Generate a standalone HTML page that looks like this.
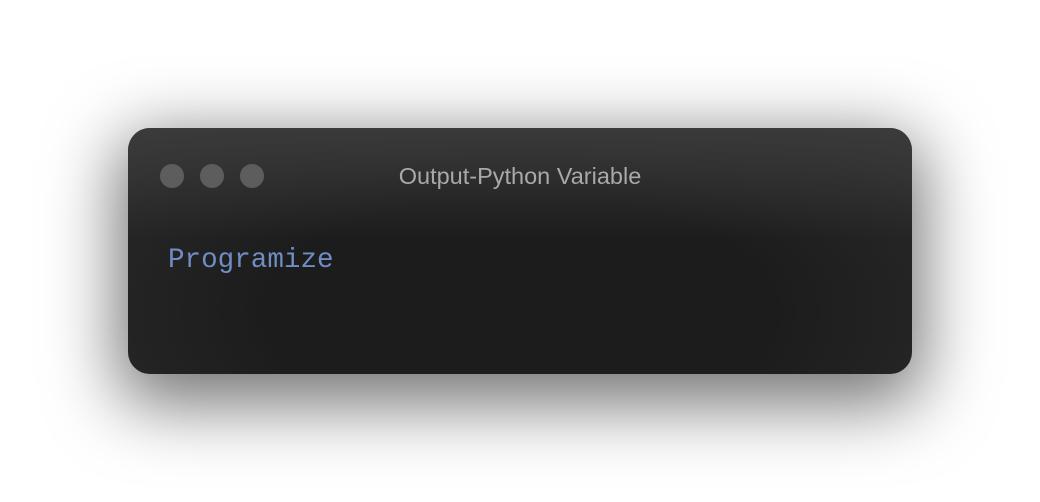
<!DOCTYPE html>
<html><head><style>
html,body{margin:0;padding:0;width:1040px;height:502px;background:#fff;overflow:hidden}
.win{position:absolute;left:128px;top:128px;width:784px;height:246px;border-radius:22px;
background:radial-gradient(ellipse at 50% 75%,#1c1c1c 45%,#262626 80%,#333 100%);
background-color:#1e1e1e;
box-shadow:0 20px 70px 10px rgba(0,0,0,0.55);overflow:hidden}
.win:before{content:"";position:absolute;inset:0;background:linear-gradient(#3a3a3a,rgba(30,30,30,0) 45%);border-radius:22px}
.dot{position:absolute;top:36px;width:24px;height:24px;border-radius:50%;background:#5d5d5d}
.title{position:absolute;left:0;right:0;top:35px;text-align:center;font:23.5px "Liberation Sans",sans-serif;color:#a9a9a9}
.code{position:absolute;left:40px;top:117px;font:27.6px "Liberation Mono",monospace;color:#6f8dc2}
</style></head><body>
<div class="win">
<div class="dot" style="left:32px"></div>
<div class="dot" style="left:72px"></div>
<div class="dot" style="left:112px"></div>
<div class="title">Output-Python Variable</div>
<div class="code">Programize</div>
</div>
</body></html>
